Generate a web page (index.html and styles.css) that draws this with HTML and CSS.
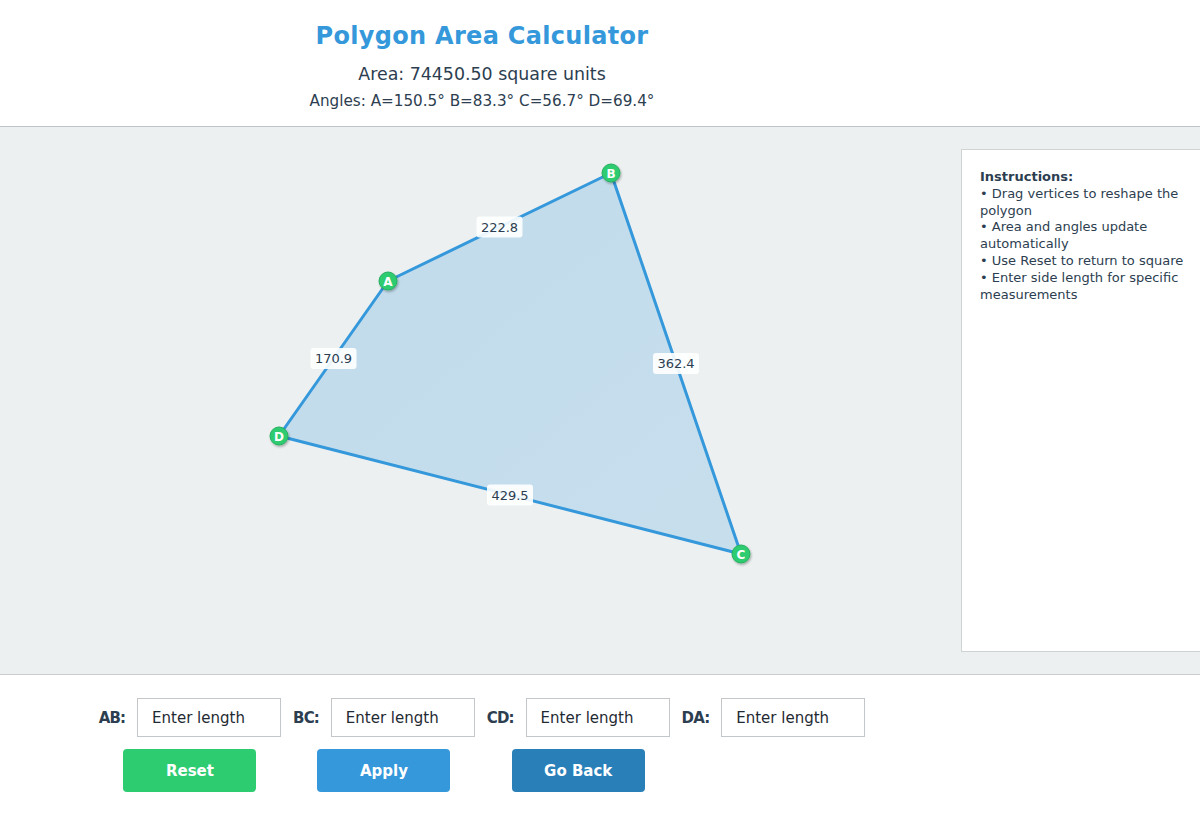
FILE: index.html
```html
<!DOCTYPE html>
<html lang="en">
<head>
<meta charset="UTF-8" />
<meta name="viewport" content="width=device-width, initial-scale=1" />
<title>Polygon Area Calculator</title>
<link rel="stylesheet" href="styles.css">
</head>
<body>

<header class="top">
  <div class="top-inner">
    <h1>Polygon Area Calculator</h1>
    <div class="area">Area: 74450.50 square units</div>
    <div class="angles">Angles: A=150.5° B=83.3° C=56.7° D=69.4°</div>
  </div>
</header>

<main class="stage">
  <svg class="board" width="961" height="547" viewBox="0 0 961 547">
    <defs>
      <linearGradient id="fillGrad" x1="0" y1="0" x2="1" y2="1">
        <stop offset="0" stop-color="#3498db" stop-opacity="0.24" />
        <stop offset="1" stop-color="#3498db" stop-opacity="0.2" />
      </linearGradient>
      <filter id="dotShadow" x="-50%" y="-50%" width="200%" height="200%">
        <feDropShadow dx="1" dy="1.5" stdDeviation="1" flood-color="#000" flood-opacity="0.3" />
      </filter>
    </defs>

    <polygon class="shape" points="388,154 611,46 741,427 279,309" />

    <!-- side lengths at edge midpoints -->
    <g class="edge-label">
      <rect x="476.5" y="89.5" width="46" height="21" rx="3" />
      <text x="499.5" y="100">222.8</text>
    </g>
    <g class="edge-label">
      <rect x="653" y="226" width="46" height="21" rx="3" />
      <text x="676" y="236.5">362.4</text>
    </g>
    <g class="edge-label">
      <rect x="487" y="357.5" width="46" height="21" rx="3" />
      <text x="510" y="368">429.5</text>
    </g>
    <g class="edge-label">
      <rect x="310.5" y="221" width="46" height="21" rx="3" />
      <text x="333.5" y="231.5">170.9</text>
    </g>

    <g class="vertex">
      <circle cx="388" cy="154" r="9" />
      <text x="388" y="154.5">A</text>
    </g>
    <g class="vertex">
      <circle cx="611" cy="46" r="9" />
      <text x="611" y="46.5">B</text>
    </g>
    <g class="vertex">
      <circle cx="741" cy="427" r="9" />
      <text x="741" y="427.5">C</text>
    </g>
    <g class="vertex">
      <circle cx="279" cy="309" r="9" />
      <text x="279" y="309.5">D</text>
    </g>
  </svg>

  <aside class="help">
    <strong>Instructions:</strong><br>
    • Drag vertices to reshape the polygon<br>
    • Area and angles update automatically<br>
    • Use Reset to return to square<br>
    • Enter side length for specific measurements
  </aside>
</main>

<section class="controls">
  <div class="col">
    <div class="field">
      <label for="ab">AB:</label>
      <input id="ab" type="number" placeholder="Enter length" />
    </div>
    <button class="btn btn-reset">Reset</button>
  </div>
  <div class="col">
    <div class="field">
      <label for="bc">BC:</label>
      <input id="bc" type="number" placeholder="Enter length" />
    </div>
    <button class="btn btn-apply">Apply</button>
  </div>
  <div class="col">
    <div class="field">
      <label for="cd">CD:</label>
      <input id="cd" type="number" placeholder="Enter length" />
    </div>
    <button class="btn btn-back">Go Back</button>
  </div>
  <div class="col">
    <div class="field">
      <label for="da">DA:</label>
      <input id="da" type="number" placeholder="Enter length" />
    </div>
  </div>
</section>

</body>
</html>
```

FILE: styles.css
```css
body {
  margin: 0;
  font-family: "DejaVu Sans", Verdana, sans-serif;
  color: #2c3e50;
  background: white;
}
.top {
  border-bottom: 1px solid #bdc3c7;
  height: 127px;
  box-sizing: border-box;
  padding-top: 21px;
}
.top-inner {
  width: 964px;
  text-align: center;
}
.top h1 {
  margin: 0 0 12px;
  font-size: 24px;
  line-height: 30px;
  font-weight: bold;
  color: #3498db;
  letter-spacing: 0.3px;
}
.area {
  font-size: 17.4px;
  line-height: 22px;
  margin-bottom: 6px;
}
.angles {
  font-size: 15.2px;
  line-height: 20px;
}
.stage {
  display: flex;
  height: 548px;
  background: #ecf0f1;
  border-bottom: 1px solid #c8cccd;
  box-sizing: border-box;
  overflow: hidden;
}
.board {
  display: block;
  flex-shrink: 0;
}
.shape {
  fill: url(#fillGrad);
  stroke: #3498db;
  stroke-width: 3;
  stroke-linejoin: round;
}
.edge-label rect {
  fill: white;
  fill-opacity: 0.9;
}
.edge-label text {
  font-size: 13px;
  fill: #2c3e50;
  text-anchor: middle;
  dominant-baseline: central;
}
.vertex circle {
  fill: #2ecc71;
  stroke: #27ae60;
  stroke-width: 1;
  filter: url(#dotShadow);
}
.vertex text {
  font-size: 12px;
  font-weight: bold;
  fill: white;
  text-anchor: middle;
  dominant-baseline: central;
}
.help {
  flex-shrink: 0;
  width: 262px;
  margin: 22px 0 22px 0;
  padding: 19px 18px;
  box-sizing: border-box;
  background: white;
  border: 1px solid #cfd3d4;
  font-size: 13px;
  line-height: 16.8px;
  color: #2c3e50;
}
.help strong {
  font-weight: bold;
}
.controls {
  width: 964px;
  display: flex;
  justify-content: center;
  gap: 12px;
  padding-top: 23px;
}
.col {
  display: flex;
  flex-direction: column;
  align-items: center;
  gap: 12px;
}
.field {
  display: flex;
  align-items: center;
  gap: 12px;
}
.field label {
  font-weight: bold;
  font-size: 15px;
  letter-spacing: -0.9px;
  color: #2c3e50;
}
.field input {
  width: 144px;
  height: 39px;
  box-sizing: border-box;
  padding: 0 14px;
  border: 1px solid #c3c7ca;
  font-family: inherit;
  font-size: 15px;
  color: #2c3e50;
  background: white;
  -moz-appearance: textfield;
}
.field input::placeholder {
  color: #1f2a33;
  opacity: 1;
}
.field input::-webkit-outer-spin-button,
.field input::-webkit-inner-spin-button {
  -webkit-appearance: none;
  margin: 0;
}
.btn {
  width: 133px;
  height: 43px;
  border: none;
  border-radius: 4px;
  color: white;
  font-family: inherit;
  font-size: 15px;
  font-weight: bold;
  cursor: pointer;
}
.btn-reset {
  background: #2ecc71;
}
.btn-apply {
  background: #3498db;
}
.btn-back {
  background: #2980b9;
}
```
